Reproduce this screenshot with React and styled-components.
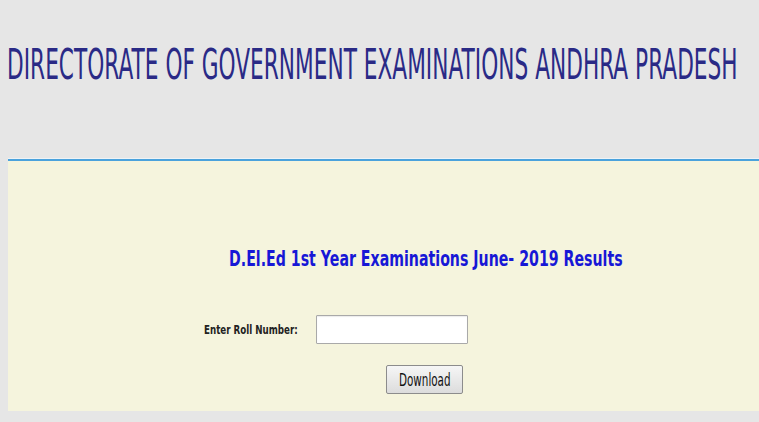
import React from "react";
import styled, { createGlobalStyle } from "styled-components";

const GlobalStyle = createGlobalStyle`
  html, body {
    margin: 0;
    padding: 0;
    background: #e6e6e6;
    overflow: hidden;
  }
  body {
    font-family: "DejaVu Sans", Verdana, sans-serif;
  }
`;

const Page = styled.div`
  width: 759px;
  height: 422px;
  background: #e6e6e6;
  overflow: hidden;
`;

const Header = styled.header`
  height: 158px;
  box-sizing: border-box;
  padding: 41px 0 0 7px;
  white-space: nowrap;
`;

const Squeeze = styled.span`
  display: inline-block;
  white-space: nowrap;
  transform: scaleX(${(p) => p.$scale});
  transform-origin: left center;
`;

const Title = styled.h1`
  margin: 0;
  font-size: 42px;
  line-height: 48px;
  font-weight: normal;
  color: #2a2a86;
`;

const Rule = styled.div`
  margin-left: 8px;
  height: 2px;
  background: #4aa2dc;
  border-top: 1px solid #eef3f6;
`;

const Panel = styled.main`
  margin-left: 8px;
  height: 250px;
  background: #f5f4dd;
  box-sizing: border-box;
  padding-top: 85px;
`;

const Heading = styled.h2`
  margin: 0 0 0 221px;
  font-size: 22px;
  line-height: 26px;
  font-weight: bold;
  color: #1717d6;
  white-space: nowrap;
`;

const Form = styled.form`
  margin: 43px 0 0 196px;
  display: grid;
  grid-template-columns: 112px 152px;
  row-gap: 21px;
  align-items: center;
`;

const Label = styled.label`
  font-size: 13px;
  font-weight: bold;
  color: #222;
  white-space: nowrap;
`;

const Input = styled.input`
  box-sizing: border-box;
  width: 152px;
  height: 29px;
  border: 1px solid #a9a9a9;
  border-radius: 1px;
  background: #fff;
  box-shadow: inset 0 1px 1px rgba(0, 0, 0, 0.08);
`;

const Button = styled.button`
  grid-column: 2;
  justify-self: end;
  margin-right: 5px;
  box-sizing: border-box;
  width: 77px;
  height: 29px;
  padding: 0 0 0 12px;
  text-align: left;
  border: 1px solid #8c8c8c;
  border-radius: 2px;
  background: linear-gradient(#f6f6f6, #dcdcdc);
  font-family: "DejaVu Sans", Verdana, sans-serif;
  font-size: 17px;
  color: #111;
  overflow: hidden;
`;

export default function App() {
  return (
    <Page>
      <GlobalStyle />
      <Header>
        <Title>
          <Squeeze $scale={0.516}>
            DIRECTORATE OF GOVERNMENT EXAMINATIONS ANDHRA PRADESH
          </Squeeze>
        </Title>
      </Header>
      <Rule />
      <Panel>
        <Heading>
          <Squeeze $scale={0.644}>
            D.El.Ed 1st Year Examinations June- 2019 Results
          </Squeeze>
        </Heading>
        <Form onSubmit={(e) => e.preventDefault()}>
          <Label htmlFor="roll">
            <Squeeze $scale={0.67}>Enter Roll Number:</Squeeze>
          </Label>
          <Input id="roll" type="text" />
          <Button type="submit">
            <Squeeze $scale={0.61}>Download</Squeeze>
          </Button>
        </Form>
      </Panel>
    </Page>
  );
}
